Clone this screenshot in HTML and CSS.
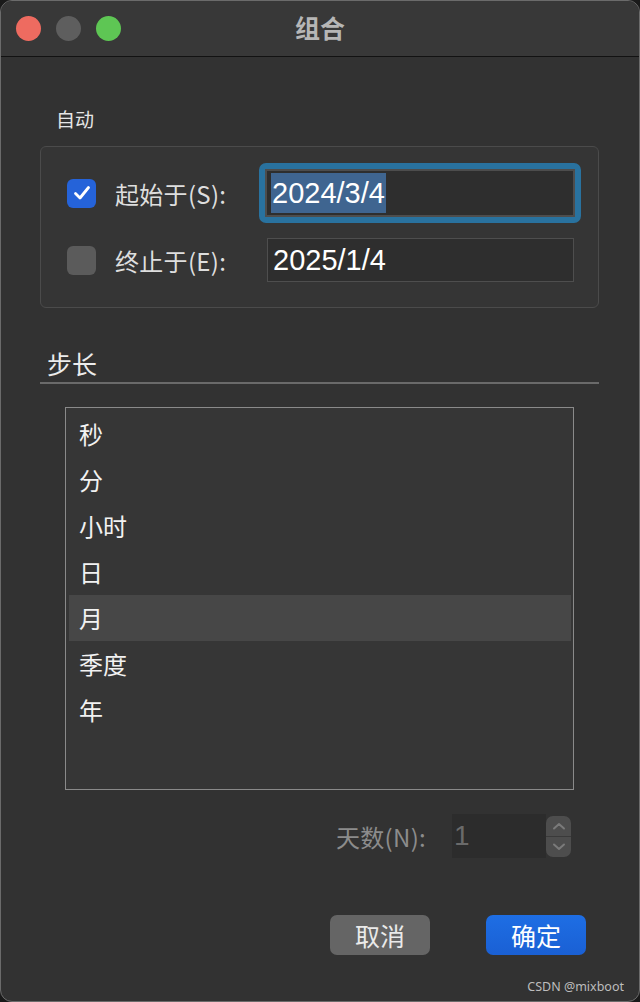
FILE: index.html
```html
<!DOCTYPE html>
<html lang="zh">
<head>
<meta charset="utf-8">
<link rel="stylesheet" href="styles.css">
</head>
<body>
<div class="window">
  <div class="titlebar">
    <div class="lights">
      <span class="light red"></span>
      <span class="light gray"></span>
      <span class="light green"></span>
    </div>
    <div class="title">组合</div>
  </div>
  <div class="content">
    <div class="auto-label">自动</div>
    <div class="groupbox">
      <div class="row row1">
        <span class="check on">
          <svg width="18" height="16" viewBox="0 0 18 16"><path d="M2.5 8.5 L7 13 L15.5 2.5" fill="none" stroke="#fff" stroke-width="2.8" stroke-linecap="round" stroke-linejoin="round"/></svg>
        </span>
        <span class="lbl">起始于(S):</span>
        <div class="focus-ring">
          <div class="field"><span class="sel">2024/3/4</span></div>
        </div>
      </div>
      <div class="row row2">
        <span class="check off"></span>
        <span class="lbl">终止于(E):</span>
        <div class="field plain">2025/1/4</div>
      </div>
    </div>
    <div class="step-head">步长</div>
    <div class="listbox">
      <div class="item">秒</div>
      <div class="item">分</div>
      <div class="item">小时</div>
      <div class="item">日</div>
      <div class="item active">月</div>
      <div class="item">季度</div>
      <div class="item">年</div>
    </div>
    <div class="days">
      <span class="days-lbl">天数(N):</span>
      <div class="days-field">1</div>
      <div class="stepper">
        <svg width="16" height="10" viewBox="0 0 16 10"><path d="M3 7.5 L8 3 L13 7.5" fill="none" stroke="#7a7a7a" stroke-width="2" stroke-linecap="round" stroke-linejoin="round"/></svg>
        <span class="sdiv"></span>
        <svg width="16" height="10" viewBox="0 0 16 10"><path d="M3 2.5 L8 7 L13 2.5" fill="none" stroke="#7a7a7a" stroke-width="2" stroke-linecap="round" stroke-linejoin="round"/></svg>
      </div>
    </div>
    <div class="buttons">
      <button class="btn cancel">取消</button>
      <button class="btn ok">确定</button>
    </div>
    <div class="watermark">CSDN @mixboot</div>
  </div>
</div>
</body>
</html>
```

FILE: styles.css
```css
* { box-sizing: border-box; }
html, body {
  margin: 0;
  padding: 0;
  width: 640px;
  height: 1002px;
  background: #1a1a1a;
  overflow: hidden;
}
body {
  font-family: "Noto Sans CJK SC", "Noto Sans", sans-serif;
}
.window {
  width: 640px;
  height: 1002px;
  border: 1px solid #6b6b6b;
  border-radius: 12px;
  background: #323232;
  overflow: hidden;
  display: flex;
  flex-direction: column;
}
.titlebar {
  height: 56px;
  flex: none;
  background: #383838;
  border-bottom: 1px solid #121212;
  display: flex;
  align-items: center;
  position: relative;
}
.lights {
  display: flex;
  gap: 15px;
  padding-left: 15px;
}
.light {
  width: 25px;
  height: 25px;
  border-radius: 50%;
  display: block;
}
.red { background: #ee6b60; }
.gray { background: #5e5e5e; }
.green { background: #5ec654; }
.title {
  position: absolute;
  left: 0;
  right: 0;
  top: 0;
  line-height: 52px;
  text-align: center;
  color: #b6b6b6;
  font-weight: 700;
  font-size: 25px;
  padding-left: 0;
}
.content {
  flex: 1;
  display: flex;
  flex-direction: column;
  padding: 0 40px 0 39px;
  position: relative;
}
.auto-label {
  color: #e6e6e6;
  font-size: 19px;
  line-height: 24px;
  margin-top: 50px;
  padding-left: 16px;
}
.groupbox {
  margin-top: 15px;
  height: 162px;
  border: 1.5px solid #4b4b4b;
  border-radius: 6px;
  background: #353535;
  padding: 16px 0 0 26px;
}
.row {
  display: flex;
  align-items: center;
}
.row1 { height: 60px; }
.row2 { height: 44px; margin-top: 15px; }
.check {
  width: 29px;
  height: 29px;
  border-radius: 6px;
  display: flex;
  align-items: center;
  justify-content: center;
  flex: none;
}
.check.on { background: #2563d9; }
.check.off { background: #5b5b5b; }
.lbl {
  color: #dedede;
  font-size: 24px;
  margin-left: 19px;
  width: 145px;
  flex: none;
  letter-spacing: 0.3px;
}
.focus-ring {
  width: 322px;
  height: 60px;
  border: 6px solid #29729f;
  border-radius: 7px;
  margin-left: -1px;
}
.field {
  height: 100%;
  border: 2px solid #4d4d4d;
  background: #2e2e2e;
  color: #fff;
  font-family: "Liberation Sans", "Noto Sans", sans-serif;
  font-size: 29px;
  display: flex;
  align-items: center;
  padding-left: 4px;
}
.sel {
  background: #3f6590;
  height: 40px;
  line-height: 40px;
  padding: 0 1px;
}
.field.plain {
  width: 307px;
  height: 44px;
  margin-left: 7px;
  border: 1.5px solid #4e4e4e;
  padding-left: 5px;
}
.step-head {
  margin-top: 38px;
  color: #ececec;
  font-size: 25px;
  line-height: 34px;
  padding-left: 7px;
  border-bottom: 2px solid #6a6a6a;
  padding-bottom: 2px;
}
.listbox {
  margin: 23px 25px 0 25px;
  height: 383px;
  border: 1.5px solid #8a8a8a;
  background: #363636;
  padding: 3px 2px 0 3px;
}
.item {
  height: 46px;
  line-height: 46px;
  color: #f2f2f2;
  font-size: 24px;
  padding-left: 10px;
}
.item.active { background: #474747; }
.days {
  display: flex;
  align-items: center;
  margin-top: 24px;
  margin-left: 296px;
  height: 44px;
}
.days-lbl {
  color: #8c8c8c;
  font-size: 24px;
  width: 116px;
  letter-spacing: 0.3px;
}
.days-field {
  width: 94px;
  height: 44px;
  background: #2c2c2c;
  color: #6a6a6a;
  font-family: "Liberation Sans", "Noto Sans", sans-serif;
  font-size: 28px;
  line-height: 44px;
  padding-left: 2px;
}
.stepper {
  width: 25px;
  height: 41px;
  background: #4d4d4d;
  border-radius: 7px;
  display: flex;
  flex-direction: column;
  align-items: center;
  justify-content: space-between;
  padding: 5px 0;
}
.stepper svg { display: block; }
.sdiv {
  display: block;
  width: 100%;
  height: 1px;
  background: #3a3a3a;
}
.buttons {
  display: flex;
  gap: 56px;
  margin-top: 57px;
  margin-left: 290px;
}
.btn {
  width: 100px;
  height: 40px;
  border: none;
  border-radius: 7px;
  font-family: "Noto Sans CJK SC", sans-serif;
  font-size: 25px;
  padding: 0;
  line-height: 38px;
}
.cancel {
  background: #656565;
  color: #eaeaea;
}
.ok {
  background: linear-gradient(#1e6ee4, #1a60d4);
  color: #fff;
}
.watermark {
  position: absolute;
  right: 15px;
  bottom: 6px;
  color: #bdbdbd;
  font-family: "Noto Sans", "Liberation Sans", sans-serif;
  font-size: 12.5px;
}
```
